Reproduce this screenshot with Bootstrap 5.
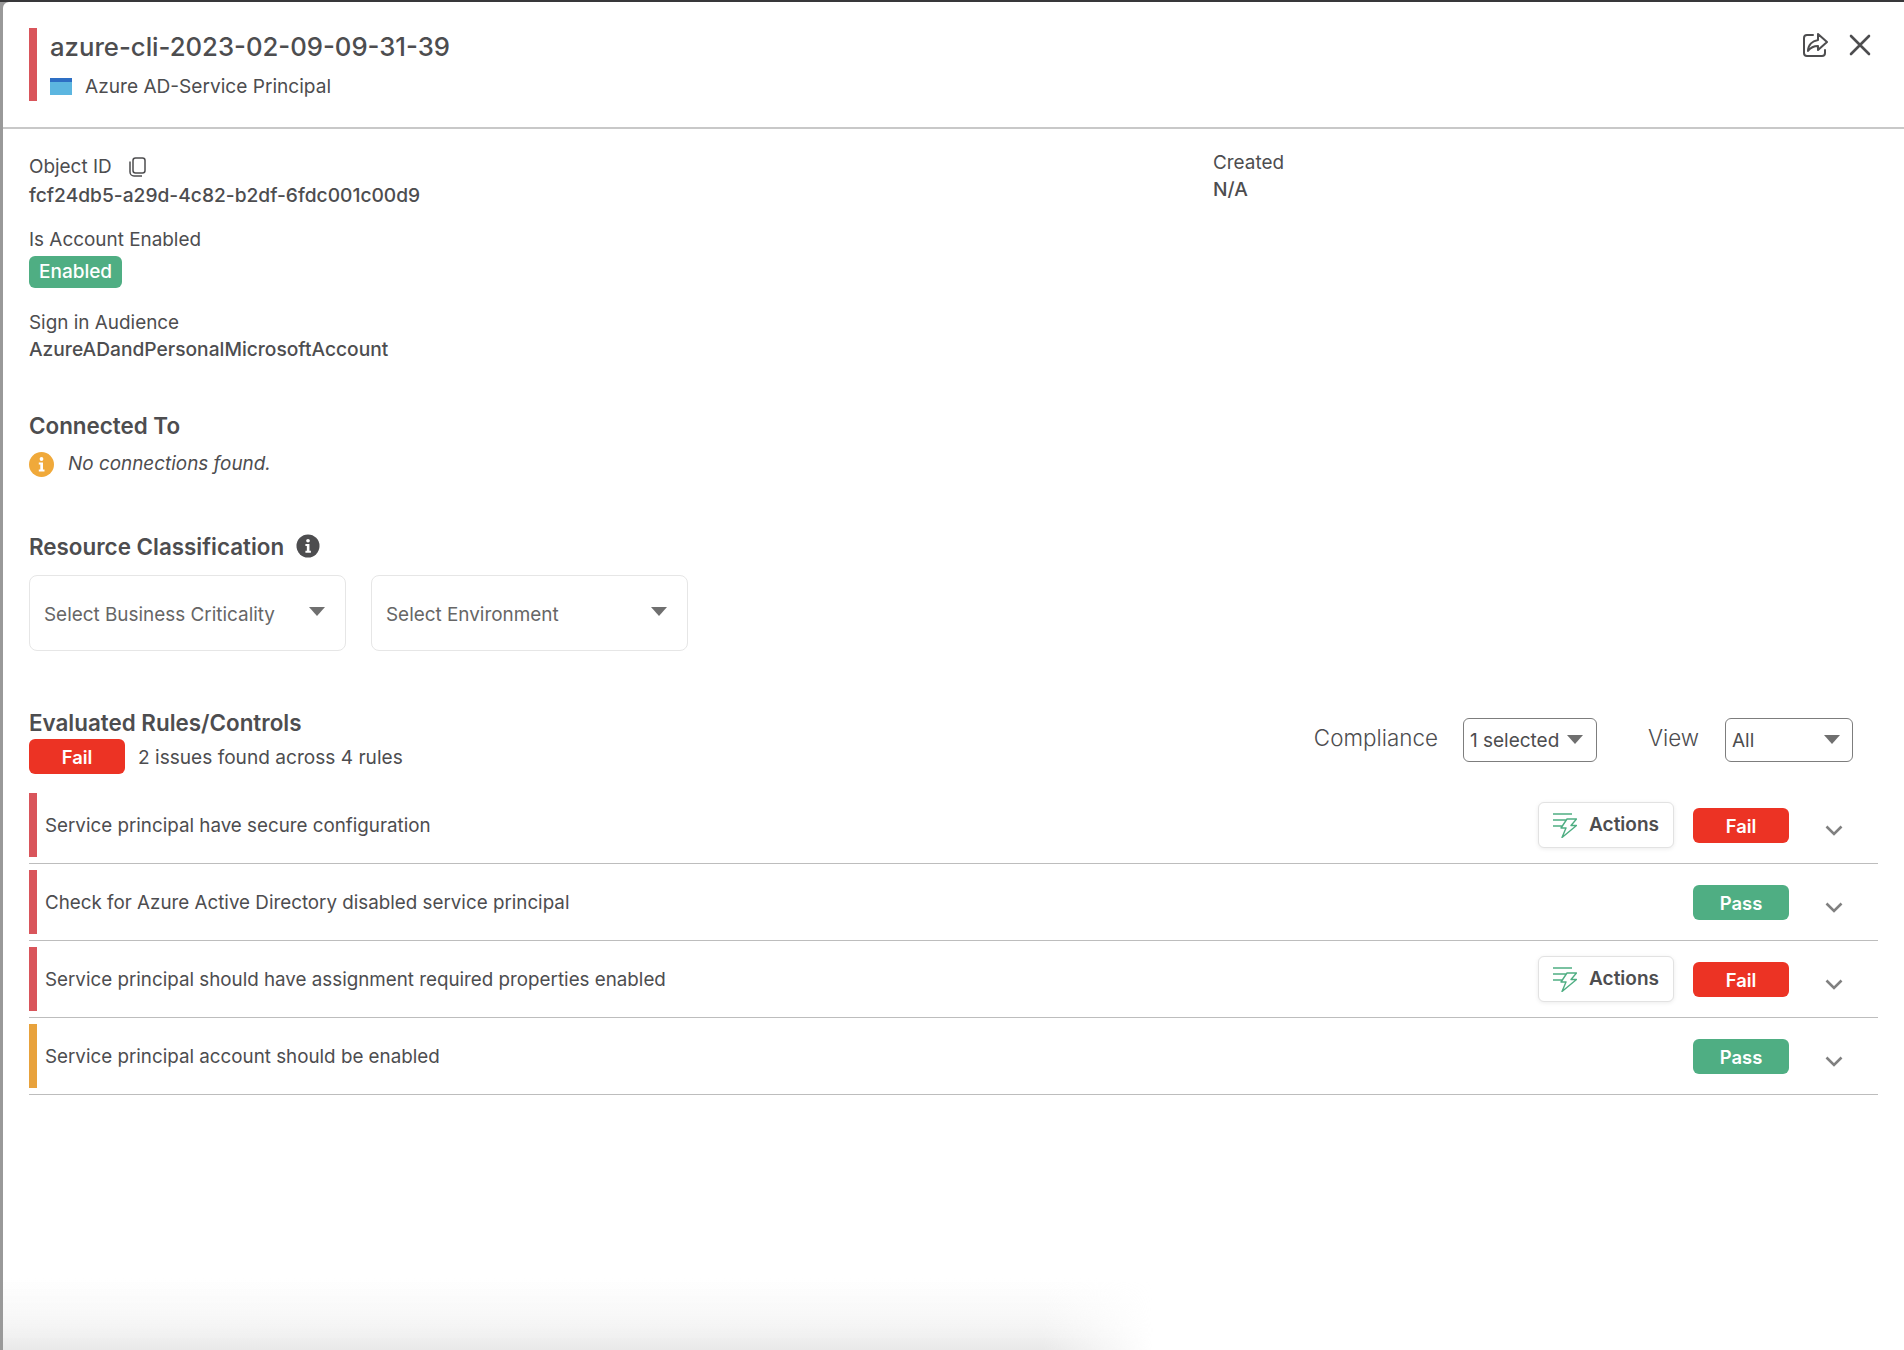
<!DOCTYPE html>
<html lang="en">
<head>
<meta charset="utf-8">
<title>azure-cli-2023-02-09-09-31-39</title>
<link href="https://cdn.jsdelivr.net/npm/bootstrap@5.3.0/dist/css/bootstrap.min.css" rel="stylesheet">
<style>
html,body{height:100%;}
body{font-family:Inter,"Liberation Sans",sans-serif;color:#4d4d4f;background:#9a9a9a;font-size:18.9px;line-height:26px;overflow:hidden;}
.shell{position:relative;height:1350px;background:#999;border-top:2px solid #38383a;}
.pane{height:100%;margin-left:3px;background:#fff;border-top-left-radius:6px;}
.panehead{height:127px;padding:26px 33px 0 26px;border-bottom:2px solid #c8c8c8;}
.redbar{width:8px;background:#d9555b;}
.amberbar{width:8px;background:#e8a23c;}
.headtext{margin-left:13px;}
.ttl{font-size:25.7px;line-height:34px;font-weight:500;margin-top:2px;}
.sub{font-size:19.1px;line-height:24px;margin-top:10px;}
.subicon{width:22px;height:17px;background:#5cb6e0;border-top:4px solid #2e6fc4;margin-right:13px;}
.bodyarea{padding:0 26px;}
.facts{height:285px;padding-top:21px;}
.factl{width:1184px;}
.val{font-weight:500;font-size:19.2px;}
.pillg{display:inline-block;background:#4fae83;color:#fff;font-weight:500;border-radius:6px;padding:3px 10px;line-height:26px;font-size:19px;}
.heading{font-size:22.4px;line-height:28px;font-weight:600;}
.pick{width:317px;height:76px;border:1px solid #e6e6e6;border-radius:8px;padding:3px 14px 0;color:#666;}
.caret{width:0;height:0;border-left:8px solid transparent;border-right:8px solid transparent;border-top:9px solid #6f6f6f;}
.failtag,.passtag{width:96px;height:35px;border-radius:6px;color:#fff;font-weight:600;font-size:18.4px;}
.failtag{background:#ec3324;}
.passtag{background:#4fae83;}
.lbl{font-size:22.4px;font-weight:300;line-height:28px;}
.sel{height:44px;border:1px solid #7d7d7d;border-radius:6px;padding:2px 6px 0;font-size:19px;}
.rulerow{height:71px;padding-right:35px;border-bottom:1px solid #bdbdbd;margin-bottom:6px;}
.rulebar{margin:0 8px 0 0;height:64px;}
.ruletext{height:64px;padding-top:1px;font-size:18.8px;}
.acts{width:136px;height:46px;border:1px solid #e2e2e2;border-radius:6px;box-shadow:0 1px 4px rgba(0,0,0,.08);font-weight:600;font-size:19px;color:#4d4d4f;background:#fff;padding:0;margin-top:9px;}
.tagslot{margin:15px 0 0 19px;}
.chev{margin:32px 0 0 36px;}
.fog{position:absolute;left:3px;right:0;bottom:0;height:72px;pointer-events:none;background:linear-gradient(to bottom,rgba(232,232,232,0),rgba(232,232,232,.3) 50%,rgba(232,232,232,.6) 80%,rgba(232,232,232,1));-webkit-mask-image:linear-gradient(to right,#000 1040px,transparent 1150px);mask-image:linear-gradient(to right,#000 1040px,transparent 1150px);}
</style>
</head>
<body>
<div class="shell">
  <div class="pane">
    <header class="panehead d-flex justify-content-between">
      <div class="d-flex" style="height:73px">
        <div class="redbar"></div>
        <div class="headtext">
          <div class="ttl">azure-cli-2023-02-09-09-31-39</div>
          <div class="sub d-flex align-items-center"><span class="subicon"></span>Azure AD-Service Principal</div>
        </div>
      </div>
      <div class="d-flex align-items-start" style="padding-top:4px;gap:21px">
        <svg width="26" height="26" viewBox="0 0 26 26" fill="none" stroke="#4d4d4f" stroke-width="2" stroke-linejoin="round" stroke-linecap="round"><path d="M11 3H5a3 3 0 0 0-3 3v15a3 3 0 0 0 3 3h15a3 3 0 0 0 3-3v-3"/><path d="M16 2l9 8-9 8v-4c-4 0-7 1-10 5 0-6 4-10 10-11z"/></svg>
        <svg width="22" height="22" viewBox="0 0 22 22" fill="none" stroke="#4d4d4f" stroke-width="2.6" stroke-linecap="round" style="margin-top:2px"><path d="M2 2l18 18M20 2L2 20"/></svg>
      </div>
    </header>
    <main class="bodyarea">
      <section class="facts d-flex">
        <div class="factl">
          <div class="d-flex align-items-center" style="padding-top:4px">Object ID
            <svg class="ms-3" width="18" height="20" viewBox="0 0 18 20" fill="none" stroke="#4d4d4f" stroke-width="1.5"><rect x="5" y="1" width="12" height="15" rx="2.5"/><path d="M2 4.5V15a4 4 0 0 0 4 4h8"/></svg>
          </div>
          <div class="val" style="margin-top:2px">fcf24db5-a29d-4c82-b2df-6fdc001c00d9</div>
          <div style="margin-top:19px">Is Account Enabled</div>
          <span class="pillg" style="margin-top:3px">Enabled</span>
          <div style="margin-top:22px">Sign in Audience</div>
          <div class="val">AzureADandPersonalMicrosoftAccount</div>
        </div>
        <div>
          <div>Created</div>
          <div class="val">N/A</div>
        </div>
      </section>

      <section>
        <div class="heading" style="margin-top:-2px">Connected To</div>
        <div class="d-flex align-items-center" style="margin-top:11px">
          <svg width="25" height="25" viewBox="0 0 25 25"><circle cx="12.5" cy="12.5" r="12.5" fill="#f0a93a"/><circle cx="12.5" cy="7" r="1.9" fill="#fff"/><path d="M9.8 10.5h4.2v7h1.5v2H9.8v-2h1.5v-5H9.8z" fill="#fff"/></svg>
          <em style="margin-left:14px">No connections found.</em>
        </div>
      </section>

      <section style="margin-top:56px">
        <div class="d-flex align-items-center">
          <span class="heading">Resource Classification</span>
          <svg width="24" height="24" viewBox="0 0 25 25" style="margin-left:12px;margin-top:-3px"><circle cx="12.5" cy="12.5" r="12" fill="#4d4d4f"/><circle cx="12.5" cy="7" r="1.9" fill="#fff"/><path d="M9.8 10.5h4.2v7h1.5v2H9.8v-2h1.5v-5H9.8z" fill="#fff"/></svg>
        </div>
        <div class="d-flex" style="gap:25px;margin-top:14px">
          <div class="pick d-flex align-items-center justify-content-between"><span>Select Business Criticality</span><i class="caret" style="margin:-7px 6px 0 0"></i></div>
          <div class="pick d-flex align-items-center justify-content-between"><span>Select Environment</span><i class="caret" style="margin:-7px 6px 0 0"></i></div>
        </div>
      </section>

      <section class="d-flex justify-content-between" style="margin-top:59px;padding-right:25px;height:83px">
        <div>
          <div class="heading" style="margin-top:-1px">Evaluated Rules/Controls</div>
          <div class="d-flex align-items-center" style="margin-top:2px">
            <span class="failtag d-inline-flex align-items-center justify-content-center">Fail</span>
            <span style="margin-left:13px;font-size:19.1px">2 issues found across 4 rules</span>
          </div>
        </div>
        <div class="d-flex" style="padding-top:8px">
          <span class="lbl" style="margin-top:6px">Compliance</span>
          <div class="sel d-flex align-items-center justify-content-between" style="width:134px;margin-left:25px"><span>1 selected</span><i class="caret" style="margin:-3px 7px 0 0"></i></div>
          <span class="lbl" style="margin:6px 0 0 51px">View</span>
          <div class="sel d-flex align-items-center justify-content-between" style="width:128px;margin-left:26px"><span>All</span><i class="caret" style="margin:-3px 6px 0 0"></i></div>
        </div>
      </section>

      <section>
        <div class="rulerow d-flex align-items-start">
          <div class="redbar rulebar"></div>
          <div class="ruletext flex-grow-1 d-flex align-items-center">Service principal have secure configuration</div>
          <button class="acts btn d-flex align-items-center justify-content-center" style="gap:12px"><svg width="24" height="25" viewBox="0 0 24 25" fill="none" stroke="#4fae83" stroke-width="1.4" stroke-linejoin="round"><path d="M0 1H19M0 7H13M0 13H9M14 6H23.5L18 12.5H23.5L9 24.5L13 15H8Z"/></svg>Actions</button>
          <div class="failtag tagslot d-flex align-items-center justify-content-center">Fail</div>
          <svg class="chev" width="18" height="11" viewBox="0 0 18 11" fill="none" stroke="#808080" stroke-width="2.6"><path d="M1.5 1.5L9 9l7.5-7.5"/></svg>
        </div>
        <div class="rulerow d-flex align-items-start">
          <div class="redbar rulebar"></div>
          <div class="ruletext flex-grow-1 d-flex align-items-center">Check for Azure Active Directory disabled service principal</div>
          <div class="passtag tagslot d-flex align-items-center justify-content-center">Pass</div>
          <svg class="chev" width="18" height="11" viewBox="0 0 18 11" fill="none" stroke="#808080" stroke-width="2.6"><path d="M1.5 1.5L9 9l7.5-7.5"/></svg>
        </div>
        <div class="rulerow d-flex align-items-start">
          <div class="redbar rulebar"></div>
          <div class="ruletext flex-grow-1 d-flex align-items-center">Service principal should have assignment required properties enabled</div>
          <button class="acts btn d-flex align-items-center justify-content-center" style="gap:12px"><svg width="24" height="25" viewBox="0 0 24 25" fill="none" stroke="#4fae83" stroke-width="1.4" stroke-linejoin="round"><path d="M0 1H19M0 7H13M0 13H9M14 6H23.5L18 12.5H23.5L9 24.5L13 15H8Z"/></svg>Actions</button>
          <div class="failtag tagslot d-flex align-items-center justify-content-center">Fail</div>
          <svg class="chev" width="18" height="11" viewBox="0 0 18 11" fill="none" stroke="#808080" stroke-width="2.6"><path d="M1.5 1.5L9 9l7.5-7.5"/></svg>
        </div>
        <div class="rulerow d-flex align-items-start">
          <div class="amberbar rulebar"></div>
          <div class="ruletext flex-grow-1 d-flex align-items-center">Service principal account should be enabled</div>
          <div class="passtag tagslot d-flex align-items-center justify-content-center">Pass</div>
          <svg class="chev" width="18" height="11" viewBox="0 0 18 11" fill="none" stroke="#808080" stroke-width="2.6"><path d="M1.5 1.5L9 9l7.5-7.5"/></svg>
        </div>
      </section>
    </main>
  </div>
  <div class="fog"></div>
</div>
<script src="https://cdn.jsdelivr.net/npm/bootstrap@5.3.0/dist/js/bootstrap.bundle.min.js"></script>
</body>
</html>
